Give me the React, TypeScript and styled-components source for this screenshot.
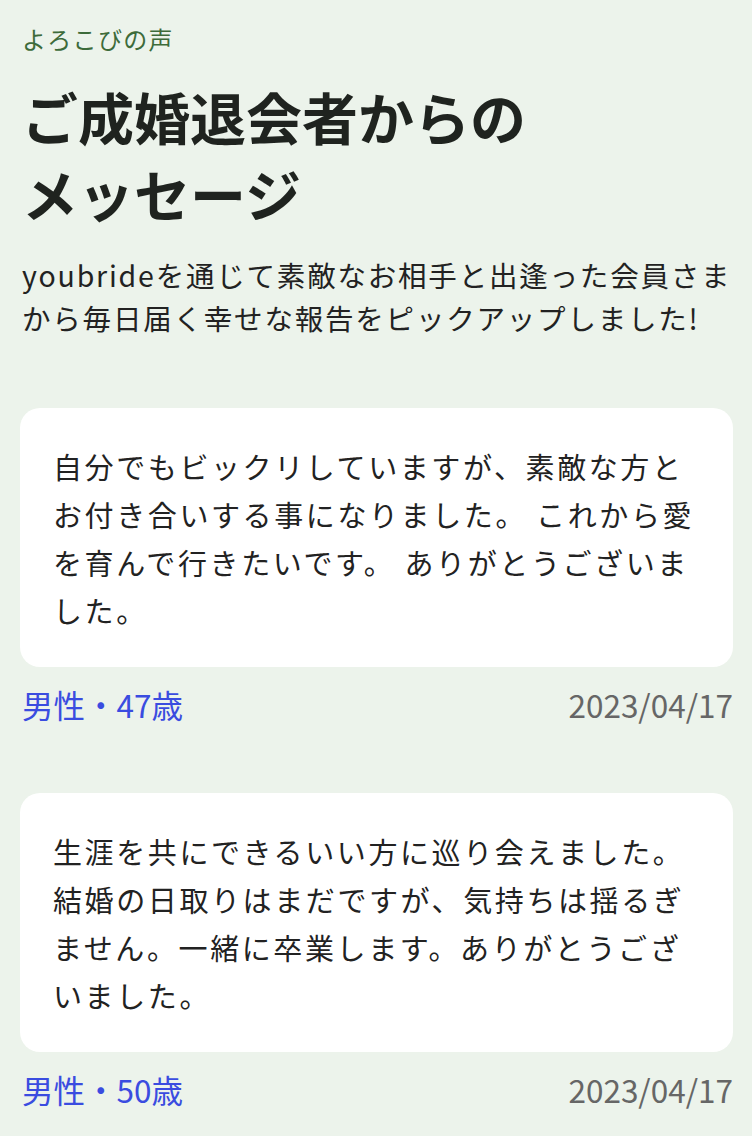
import React from "react";
import styled, { createGlobalStyle } from "styled-components";

const GlobalStyle = createGlobalStyle`
  html, body {
    margin: 0;
    padding: 0;
    background: #ecf3eb;
  }
  body {
    font-family: "Noto Sans CJK JP", "Noto Sans", sans-serif;
    color: #222;
  }
  * { box-sizing: border-box; }
`;

const Page = styled.main`
  min-height: 1136px;
  padding: 22px 19px 40px 20px;
  background: #ecf3eb;
`;

const Eyebrow = styled.p`
  margin: 0 0 0 2px;
  font-size: 24px;
  line-height: 34px;
  letter-spacing: 1.3px;
  color: #3d6b3a;
`;

const Title = styled.h1`
  margin: 21px 0 0 2px;
  font-size: 56px;
  line-height: 77px;
  font-weight: 700;
  color: #1f231f;
  letter-spacing: 0;
`;

const Lead = styled.p`
  margin: 22px 0 0 2px;
  font-size: 28.5px;
  line-height: 43px;
  letter-spacing: 1.8px;
  color: #222;
`;

const List = styled.section`
  margin-top: 69px;
  display: flex;
  flex-direction: column;
  gap: 69px;
`;

const Item = styled.article`
  display: flex;
  flex-direction: column;
  gap: 17px;
`;

const Card = styled.div`
  background: #fff;
  border-radius: 20px;
  padding: 34px 26px 33px 33px;
`;

const Message = styled.p`
  margin: 0;
  font-size: 29px;
  line-height: 48px;
  letter-spacing: 2.6px;
  color: #222;
`;

const Meta = styled.div`
  display: flex;
  justify-content: space-between;
  align-items: center;
  padding-left: 2px;
  line-height: 40px;
`;

const Person = styled.span`
  font-size: 31.5px;
  color: #3a4ce0;
`;

const DateText = styled.span`
  font-size: 31.5px;
  color: #666;
`;

const messages = [
  {
    text: "自分でもビックリしていますが、素敵な方とお付き合いする事になりました。 これから愛を育んで行きたいです。 ありがとうございました。",
    person: "男性・47歳",
    date: "2023/04/17",
  },
  {
    text: "生涯を共にできるいい方に巡り会えました。結婚の日取りはまだですが、気持ちは揺るぎません。一緒に卒業します。ありがとうございました。",
    person: "男性・50歳",
    date: "2023/04/17",
  },
];

export default function App() {
  return (
    <>
      <GlobalStyle />
      <Page>
        <Eyebrow>よろこびの声</Eyebrow>
        <Title>
          ご成婚退会者からの
          <br />
          メッセージ
        </Title>
        <Lead>
          youbrideを通じて素敵なお相手と出逢った会員さまから毎日届く幸せな報告をピックアップしました!
        </Lead>
        <List>
          {messages.map((m, i) => (
            <Item key={i}>
              <Card>
                <Message>{m.text}</Message>
              </Card>
              <Meta>
                <Person>{m.person}</Person>
                <DateText>{m.date}</DateText>
              </Meta>
            </Item>
          ))}
        </List>
      </Page>
    </>
  );
}
